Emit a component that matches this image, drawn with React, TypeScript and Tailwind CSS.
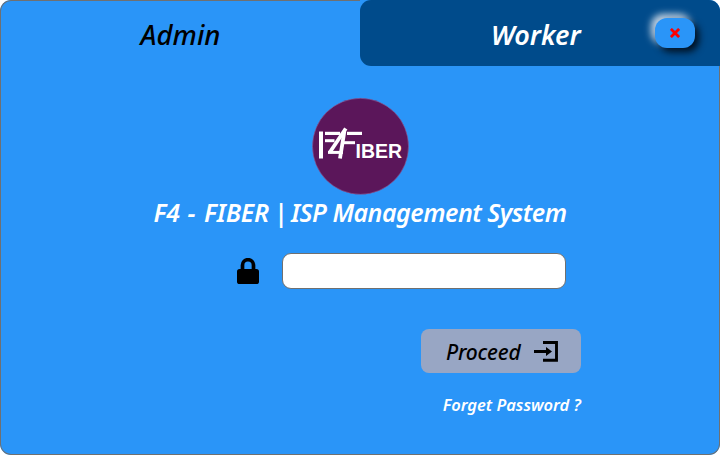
import React from "react";

const uiFont = "font-['Noto_Sans','Open_Sans',sans-serif] italic";

function Logo() {
  return (
    <svg className="block h-[98px] w-[98px] not-italic" viewBox="0 0 98 98" aria-label="F4 Fiber">
      <circle cx="49.5" cy="49.3" r="48" fill="#5b165a" stroke="#8d5c96" strokeWidth="0.6" />
      <g stroke="#fff" fill="none">
        <line x1="10" y1="34.5" x2="10" y2="61.5" strokeWidth="4" />
        <line x1="14" y1="36.4" x2="29" y2="36.4" strokeWidth="3.2" />
        <line x1="14" y1="43.7" x2="23.5" y2="43.7" strokeWidth="3" />
        <line x1="34.8" y1="31.5" x2="18.7" y2="55.5" strokeWidth="3.8" />
        <line x1="17" y1="55.4" x2="32" y2="55.4" strokeWidth="3" />
        <line x1="33.4" y1="34" x2="29" y2="61.5" strokeWidth="3.8" />
        <line x1="36" y1="36.4" x2="51" y2="36.4" strokeWidth="3.2" />
        <line x1="32" y1="45.7" x2="44" y2="45.7" strokeWidth="3" />
      </g>
      <text
        x="44.5"
        y="60.8"
        fill="#fff"
        fontFamily="Liberation Sans, sans-serif"
        fontStyle="normal"
        fontWeight="700"
        fontSize="21"
        textLength="46.5"
        lengthAdjust="spacingAndGlyphs"
      >
        IBER
      </text>
    </svg>
  );
}

function LockIcon() {
  return (
    <svg className="h-[27px] w-[22px]" viewBox="0 0 22 27">
      <path d="M5.5 13V7.2a5.5 5.5 0 0 1 11 0V13" fill="none" stroke="#000" strokeWidth="3.7" />
      <rect x="0" y="11" width="22" height="15" rx="2.6" />
    </svg>
  );
}

function EnterIcon() {
  return (
    <svg className="h-[21px] w-[24px]" viewBox="0 0 24 21">
      <path d="M9 1.5h13.5v17.8H9" fill="none" stroke="#000" strokeWidth="2.9" />
      <path d="M0 9h12V6l6 4.5-6 4.5v-3H0z" />
    </svg>
  );
}

export default function App() {
  return (
    <div className={`h-[455px] w-[720px] bg-white ${uiFont}`}>
      <div className="flex h-full flex-col overflow-hidden rounded-[11px] bg-[#2a95f8]">
        <div className="flex h-[66px] shrink-0">
          <div className="flex w-[360px] items-center justify-center rounded-tl-[11px] border-l border-t border-[#707070] pt-[3px] text-[27.5px] font-medium text-black">
            <span>Admin</span>
          </div>
          <div className="flex w-[360px] items-center rounded-l-[11px] bg-[#004b8b] pl-[131px] text-white">
            <span className="w-[164px] whitespace-nowrap pt-[4px] text-[27px] font-semibold">Worker</span>
            <button className="flex h-[30px] w-[40px] items-center justify-center rounded-[12px] bg-[#2a95f8] shadow-[4px_4px_7px_#001020,-4px_-4px_7px_#c5d5e5]">
              <svg className="h-[10px] w-[10px]" viewBox="0 0 10 10">
                <path d="M0.9 0.9l8.2 8.2M9.1 0.9L0.9 9.1" stroke="#f00" strokeWidth="2.8" />
              </svg>
            </button>
          </div>
        </div>
        <main className="flex flex-1 flex-col items-center rounded-b-[11px] border-x border-b border-[#707070] pt-[31px]">
          <Logo />
          <h1 className="mt-px h-[33px] whitespace-nowrap text-[25px] font-semibold leading-[32px] text-white">
            F4 <span className="ml-px mr-[2px]">-</span> <span className="tracking-[-0.1px]">FIBER</span>
            <span className="tracking-[-1.6px]"> | </span>
            <span className="tracking-[-0.5px]">ISP Management System</span>
          </h1>
          <div className="ml-[236px] mt-[24px] flex w-[329px] items-center justify-between self-start">
            <LockIcon />
            <input
              type="password"
              className="h-[36px] w-[284px] rounded-[9px] border border-[#707070] bg-white outline-none"
            />
          </div>
          <button className="ml-[420px] mt-[40px] flex h-[44px] w-[160px] items-center self-start rounded-[8px] bg-[#98a6c4] pl-[25px] italic text-black">
            <span className="w-[88px] pt-[2px] text-left text-[21px] font-medium leading-[42px] tracking-[-0.2px]">
              Proceed
            </span>
            <EnterIcon />
          </button>
          <a className="mr-[138px] mt-[20px] self-end whitespace-nowrap text-[16.5px] font-semibold leading-6 text-white">
            Forget Password ?
          </a>
        </main>
      </div>
    </div>
  );
}
